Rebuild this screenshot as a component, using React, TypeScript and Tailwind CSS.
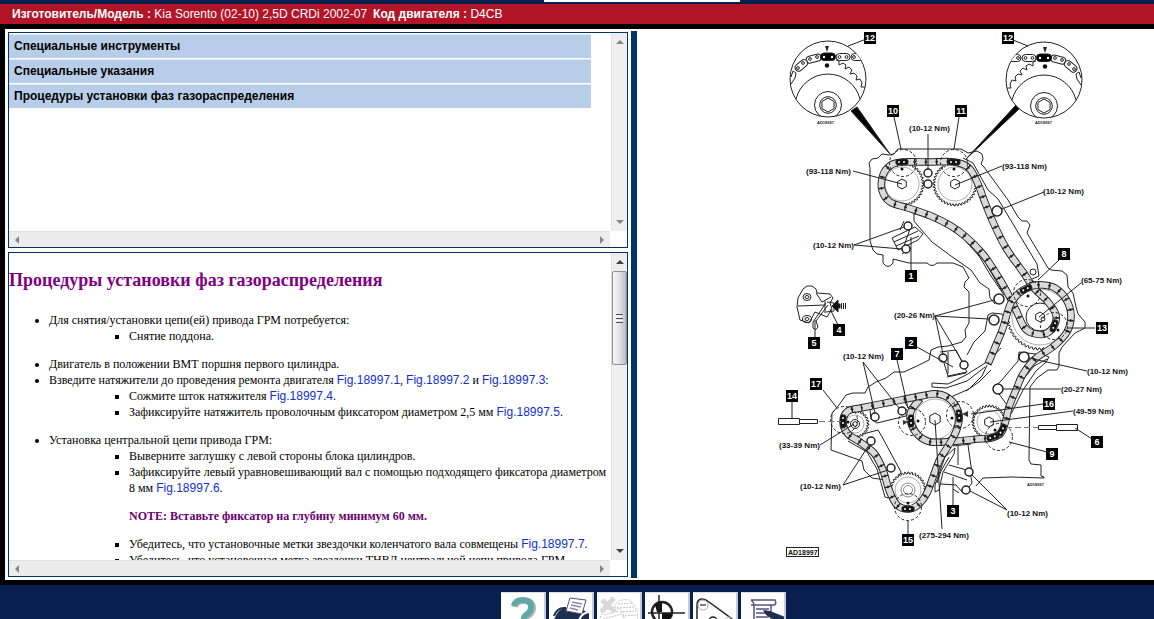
import type { ReactNode } from 'react'

type Pt = [number, number]

const SECTIONS = [
  'Специальные инструменты',
  'Специальные указания',
  'Процедуры установки фаз газораспределения',
]

/* ---------- Scroll frame ---------- */

function Arrow({ dir, dim }: { dir: 'up' | 'down' | 'left' | 'right'; dim?: boolean }) {
  const shapes = {
    up: 'M0 6 L4 2 L8 6 Z',
    down: 'M0 2 L4 6 L8 2 Z',
    left: 'M6 0 L2 4 L6 8 Z',
    right: 'M2 0 L6 4 L2 8 Z',
  }
  return (
    <svg viewBox="0 0 8 8" className="h-2 w-2" aria-hidden="true">
      <path d={shapes[dir]} fill={dim ? '#858585' : '#404040'} />
    </svg>
  )
}

function ScrollFrame({ children, size, thumb }: { children: ReactNode; size: string; thumb?: boolean }) {
  return (
    <div className={`${size} grid min-h-0 grid-cols-[minmax(0,1fr)_16px] grid-rows-[minmax(0,1fr)_16px] gap-x-px border border-[#003366] bg-white`}>
      <div className="min-h-0 overflow-hidden">{children}</div>
      <div className="flex flex-col items-center justify-between border-l border-[#e0e0e0] bg-[#eeeeee]">
        <button type="button" aria-label="Вверх" className="flex h-[18px] w-full shrink-0 items-center justify-center">
          <Arrow dir="up" dim={!thumb} />
        </button>
        {thumb && (
          <div className="flex h-[94px] w-full shrink-0 flex-col items-center justify-center gap-px rounded-xs border border-[#8f8f8f] bg-linear-to-r from-[#f7f7f7] via-[#e2e2e4] to-[#bdbdc0]">
            <span className="h-px w-[7px] bg-[#555]" />
            <span className="h-px w-[7px] bg-white" />
            <span className="h-px w-[7px] bg-[#555]" />
            <span className="h-px w-[7px] bg-white" />
            <span className="h-px w-[7px] bg-[#555]" />
          </div>
        )}
        <div className="flex-1" />
        <button type="button" aria-label="Вниз" className="flex h-[18px] w-full shrink-0 items-center justify-center">
          <Arrow dir="down" dim={!thumb} />
        </button>
      </div>
      <div className="flex items-center justify-between border-t border-[#e0e0e0] bg-[#ececec]">
        <button type="button" aria-label="Влево" className="flex h-full w-4 items-center justify-center">
          <Arrow dir="left" dim />
        </button>
        <button type="button" aria-label="Вправо" className="flex h-full w-4 items-center justify-center">
          <Arrow dir="right" dim />
        </button>
      </div>
      <div />
    </div>
  )
}

/* ---------- Procedure text ---------- */

function Fig({ n }: { n: number }) {
  return (
    <a href={`#fig-${n}`} className="font-['Liberation_Sans',Arial,sans-serif] text-[#1030d0]">
      Fig.18997.{n}
    </a>
  )
}

function Sub({ children }: { children: ReactNode }) {
  return <ul className="list-[square] pl-20">{children}</ul>
}

function Procedure() {
  return (
    <div className="font-['Liberation_Serif','Times_New_Roman',serif] text-xs leading-4 text-black">
      <h2 className="mt-[15px] mb-5 text-lg leading-6 font-bold text-[#800080]">
        Процедуры установки фаз газораспределения
      </h2>
      <ul className="list-disc pl-10">
        <li>
          Для снятия/установки цепи(ей) привода ГРМ потребуется:
          <Sub>
            <li>Снятие поддона.</li>
          </Sub>
        </li>
        <li className="mt-3">Двигатель в положении ВМТ поршня первого цилиндра.</li>
        <li>
          Взведите натяжители до проведения ремонта двигателя <Fig n={1} />, <Fig n={2} /> и <Fig n={3} />:
          <Sub>
            <li>
              Сожмите шток натяжителя <Fig n={4} />.
            </li>
            <li>
              Зафиксируйте натяжитель проволочным фиксатором диаметром 2,5 мм <Fig n={5} />.
            </li>
          </Sub>
        </li>
        <li className="mt-3">
          Установка центральной цепи привода ГРМ:
          <Sub>
            <li>Выверните заглушку с левой стороны блока цилиндров.</li>
            <li>
              Зафиксируйте левый уравновешивающий вал с помощью подходящего фиксатора диаметром 8 мм <Fig n={6} />.
              <p className="my-3 font-bold text-[#6b0070]">NOTE: Вставьте фиксатор на глубину минимум 60 мм.</p>
            </li>
            <li>
              Убедитесь, что установочные метки звездочки коленчатого вала совмещены <Fig n={7} />.
            </li>
            <li>Убедитесь, что установочная метка звездочки ТНВД центральной цепи привода ГРМ</li>
          </Sub>
        </li>
      </ul>
    </div>
  )
}

/* ---------- Timing chain diagram ---------- */

// Catmull-Rom spline through the points
function spline(pts: Pt[], closed = false) {
  const n = pts.length
  const at = (i: number) => (closed ? pts[(i + n) % n] : pts[Math.max(0, Math.min(n - 1, i))])
  let d = `M${pts[0][0]} ${pts[0][1]}`
  for (let i = 0; i < (closed ? n : n - 1); i++) {
    const [a, b, c, e] = [at(i - 1), at(i), at(i + 1), at(i + 2)]
    d += `C${b[0] + (c[0] - a[0]) / 6} ${b[1] + (c[1] - a[1]) / 6} ${c[0] - (e[0] - b[0]) / 6} ${c[1] - (e[1] - b[1]) / 6} ${c[0]} ${c[1]}`
  }
  return d
}

function toothed(cx: number, cy: number, r: number, teeth: number, depth = 2) {
  const out: string[] = []
  for (let i = 0; i < teeth * 4; i++) {
    const a = (i / (teeth * 4)) * Math.PI * 2
    const rr = i % 4 < 2 ? r : r - depth
    out.push(`${(cx + rr * Math.cos(a)).toFixed(1)},${(cy + rr * Math.sin(a)).toFixed(1)}`)
  }
  return out.join(' ')
}

function hexagon(cx: number, cy: number, r: number) {
  return [30, 90, 150, 210, 270, 330]
    .map((a) => `${cx + r * Math.cos((a * Math.PI) / 180)},${cy + r * Math.sin((a * Math.PI) / 180)}`)
    .join(' ')
}

function Gear({ x, y, r, teeth }: { x: number; y: number; r: number; teeth: number }) {
  return (
    <>
      <polygon points={toothed(x, y, r, teeth)} fill="#fff" />
      <circle cx={x} cy={y} r={r - 5} stroke="#888" strokeWidth="0.7" />
    </>
  )
}

function Chain({ d }: { d: string }) {
  return (
    <>
      <path d={d} stroke="#222" strokeWidth="7.500" />
      <path d={d} stroke="#dadada" strokeWidth="5.700" />
      <path d={d} stroke="#222" strokeWidth="6.500" strokeDasharray="1.4 9.6" />
      <path d={d} stroke="#222" strokeWidth="1.500" strokeDasharray="2.600 8.400" strokeDashoffset="0.600" />
    </>
  )
}

// Black timing-mark links with pale pins
function MarkLink({ x, y, rot }: { x: number; y: number; rot: number }) {
  return (
    <g transform={`translate(${x} ${y}) rotate(${rot})`}>
      <rect x="-6" y="-2.5" width="12" height="5" rx="1.5" fill="#111" />
      <circle cx="-3" r="1" fill="#fff" stroke="none" />
      <circle cx="2" r="1" fill="#fff" stroke="none" />
    </g>
  )
}

const CAM_CHAIN: Pt[] = [
  [902, 162], [928, 162], [953, 162], [968, 168], [977, 184], [983, 200], [992, 222], [1005, 248], [1022, 272],
  [1033, 288], [1047, 302], [1055, 315], [1053, 326], [1044, 334], [1031, 333], [1023, 327], [1015, 310],
  [1005, 290], [993, 270], [981, 253], [965, 237], [950, 226], [930, 216], [907, 208], [889, 202], [881, 190],
  [882, 175], [890, 165],
]

const PUMP_CHAIN: Pt[] = [
  [987, 364], [995, 345], [1002, 328], [1009, 305], [1018, 293], [1031, 286], [1042, 285], [1054, 288], [1065, 299],
  [1070, 315], [1066, 332], [1053, 346], [1034, 359], [1022, 374], [1015, 390], [1008, 407], [1005, 420],
  [1000, 433], [990, 438], [977, 439], [957, 441], [930, 442], [917, 435], [910, 423], [910, 411], [919, 399],
]

const BALANCE_CHAIN: Pt[] = [
  [860, 408], [890, 402], [920, 396], [937, 394], [951, 401], [958, 415], [956, 429], [949, 443], [939, 459],
  [932, 477], [926, 493], [917, 505], [907, 509], [896, 505], [888, 490], [882, 470], [873, 453], [859, 442],
  [847, 434], [842, 422], [847, 411],
]

const BOLTS: [number, number, number][] = [
  [927, 173, 4], [927, 184, 4], [996, 211, 5], [907, 226, 4], [905, 249, 4], [998, 299, 5], [993, 320, 5],
  [942, 358, 4], [963, 365, 4], [1023, 357, 5], [997, 389, 5], [874, 417, 4], [901, 411, 4], [870, 441, 4],
  [890, 468, 4], [968, 472, 4], [965, 490, 4],
]

const DASHED_RINGS: Pt[] = [
  [902, 163], [953, 163], [1026, 293], [1053, 326], [843, 420], [911, 422], [959, 415], [998, 437], [907, 507],
]

const MARK_DOTS: Pt[] = [
  [901, 169], [953, 169], [1027, 296], [1057, 330], [847, 422], [917, 421], [951, 418], [994, 430], [907, 503],
]

const LEADERS =
  'M868 38L847 46M1012 40L1027 46M893 117L900 149M958 117L953 149M927 134V169M852 171L901 184M1001 166L954 185' +
  'M1043 192L1001 209M853 245L903 227M853 245L901 249M910 237V271M1058 260L1037 280M1080 283L1038 317' +
  'M1094 328H1066M1086 371L1028 358M1060 389H1002M934 316L993 300M934 316L988 319M934 316L942 354M934 316L961 361' +
  'M916 347L952 367M862 362L874 413M862 362L898 408M896 360L907 408M822 390L836 408M791 401V419M1074 428L1091 439' +
  'M1042 404L970 414M1072 411L989 422M1046 452L1008 442M819 445L853 424M842 485L868 445M842 485L887 470' +
  'M941 529L934 420M952 506V477M1006 510L971 475M1006 510L969 491M907 534V521M832 324L837 325L829 309M814 337V320'

const CALLOUTS: [string, number, number][] = [
  ['12', 869, 38], ['12', 1007, 38], ['10', 892, 111], ['11', 960, 111], ['8', 1063, 254], ['13', 1101, 328],
  ['1', 910, 276], ['4', 838, 330], ['5', 813, 343], ['2', 910, 343], ['7', 896, 354], ['17', 815, 384],
  ['14', 791, 396], ['16', 1048, 404], ['6', 1096, 442], ['9', 1051, 454], ['3', 952, 511], ['15', 907, 540],
]

const TORQUES: [string, number, number][] = [
  ['(10-12 Nm)', 908, 131], ['(93-118 Nm)', 805, 174], ['(93-118 Nm)', 1001, 169], ['(10-12 Nm)', 1042, 194],
  ['(10-12 Nm)', 812, 248], ['(65-75 Nm)', 1080, 283], ['(20-26 Nm)', 893, 318], ['(10-12 Nm)', 842, 359],
  ['(10-12 Nm)', 1086, 374], ['(20-27 Nm)', 1060, 392], ['(49-59 Nm)', 1072, 414], ['(33-39 Nm)', 778, 448],
  ['(10-12 Nm)', 799, 489], ['(10-12 Nm)', 1006, 516], ['(275-294 Nm)', 918, 538],
]

// Enlarged view of a camshaft sprocket; the right one mirrors the left
function Magnifier({ flip }: { flip?: boolean }) {
  return (
    <g transform={flip ? 'translate(1043 80) scale(-1 1)' : 'translate(827 79)'}>
      <circle r="38" fill="#fff" />
      <g clipPath="url(#lens)">
        <path d="M-32 20A33 33 0 0 1 32 20" />
        <circle cy="26" r="13.5" />
        <circle cy="26" r="8.3" />
        <polygon points={hexagon(0, 26, 7)} />
        <path d="M8-19L11-18L11-14L15-16L18-14L17-10L21-12L24-9L22-5L26-6L29-3L28 1L32 0L34 4L33 8L37 8" />
        <g fill="#fff">
          <rect x="8" y="-25.500" width="14" height="7" rx="3.500" />
          <rect x="23" y="-25.500" width="13" height="7" rx="3.500" />
          <rect x="-22" y="-24" width="15" height="7" rx="3.500" transform="rotate(-14 -14 -21)" />
          <rect x="-34" y="-17" width="14" height="7" rx="3.500" transform="rotate(-40 -27 -14)" />
          <path d="M-37-2L-35-8L-32-6L-33-1L-37 5" />
          <circle cx="11.500" cy="-22" r="1.400" />
          <circle cx="18.500" cy="-22" r="1.400" />
          <circle cx="26" cy="-22" r="1.400" />
          <circle cx="-18" cy="-20" r="1.400" />
          <circle cx="-11" cy="-22" r="1.400" />
          <circle cx="-30" cy="-11" r="1.400" />
          <circle cx="-25" cy="-16" r="1.400" />
        </g>
        <rect x="-7.500" y="-26" width="15" height="7.500" rx="3.500" fill="#000" />
        <circle cx="-4" cy="-22" r="1.200" fill="#fff" stroke="none" />
        <circle cx="4" cy="-22" r="1.200" fill="#fff" stroke="none" />
        <path d="M-3-33H1L-1-27Z" fill="#222" stroke="none" />
        <circle cx="-1" cy="-13.500" r="2.200" fill="#111" stroke="none" />
      </g>
    </g>
  )
}

function EngineDiagram() {
  return (
    <svg
      viewBox="636 31 517 547"
      className="h-full w-full font-['Liberation_Sans',Arial,sans-serif]"
      role="img"
      aria-label="AD18997"
      fill="none"
      stroke="#222"
      strokeWidth="1"
    >
      <clipPath id="lens">
        <circle r="38" />
      </clipPath>

      {/* engine casing */}
      <path d="M869 241V168L868 163L871 159L877 158L881 154L888 155L893 154L897 149H960L967 153L976 151L981 154L982 159L980 164L983 167L1007 200L1017 217L1021 221L1026 221L1029 225L1026 233L1047 268L1050 270L1061 271L1066 275L1067 287L1072 293L1075 307L1077 314L1084 322V328L1074 333L1061 347L1058 353V366L1056 370H1047L1036 378L1029 387L1028 460L1030 464L1040 465V476L1043 477V478L1010 477L982 478L975 486" />
      <path d="M869 241L872 250L876 254L882 255V263Q887 270 892 263V259L900 261L908 263H926Q931 268 936 263L952 263L962 267L968 278L964 282L963 287L968 292V323L964 330L965 337L961 342L947 346L937 347L930 350L928 360L918 365L903 372L893 372L885 378L875 382L867 387L864 393L852 393L845 395L838 405L831 413L830 450L861 461L863 470L871 478L885 480" />
      <path d="M986 365L981 376L968 389L950 397L940 398M990 370L978 382L965 391" />

      {/* guides and brackets */}
      <path d="M913 214L920 213L940 221L961 237L978 256L990 276L1003 295M913 214V221L918 227L931 242L950 256L970 270L979 283L988 289L989 298L994 304M925 214L945 222L965 239L984 262L1001 291" />
      <path d="M962 158L972 163L982 181L987 190L997 199L1036 264L1038 276L1031 279M960 162L968 166L980 190" />
      <circle cx="1032" cy="272" r="3" />
      <path d="M987 315L991 313L1001 314L1003 318L995 348L986 363M987 315L984 331L973 342L966 355" />
      <path d="M1018 352L1043 355L1048 357L1045 362L1035 371L1022 390L1010 414L1005 413M1018 352L1017 361L1000 381L993 387L1006 405M1046 359L1033 366L1020 382L1009 409" />
      <path d="M891 238L914 227L922 234L917 240L897 250ZM893 242L917 231M895 246L918 236M903 221L899 230M909 229L903 246M901 254L910 248" fill="#fff" />
      <path d="M939 352L955 350L961 362L966 372L947 376L943 363M947 352V374M946 377L965 373M931 383L947 384L965 375L989 360L1000 348M931 383V387L945 388L966 381L984 367" />
      <path d="M869 410L872 408L903 401L908 409L905 416L876 423L870 419Z" fill="#fff" />
      <path d="M847 438L877 430L880 435L900 472L891 489" />
      <path d="M847 441L866 452L876 469L884 497L887 498L889 492M851 440L870 452L881 473L886 491" />
      <path d="M954 448L944 457L934 485V492L938 490L942 472L953 454ZM948 457L940 471L936 483" fill="#fff" />
      <path d="M948 465L969 471L971 483L963 494L955 485L940 484M943 472L966 480M952 446L970 444M957 446V465M967 445L971 473M958 493L952 489" />

      {/* sprockets */}
      <Gear x={901} y={184} r={22} teeth={40} />
      <Gear x={954} y={184} r={22} teeth={40} />
      <Gear x={1039} y={317} r={33} teeth={50} />
      <circle cx="1039" cy="317" r="14" />
      <Gear x={934} y={419} r={25} teeth={44} />
      <Gear x={854} y={424} r={14} teeth={26} />
      <Gear x={988} y={422} r={17} teeth={32} />
      <Gear x={907} y={490} r={18} teeth={32} />

      <Chain d={spline(CAM_CHAIN, true)} />
      <Chain d={spline(PUMP_CHAIN)} />
      <Chain d={spline(BALANCE_CHAIN, true)} />

      <g fill="#fff">
        <polygon points={hexagon(901, 184, 5)} />
        <polygon points={hexagon(954, 184, 5)} />
        <polygon points={hexagon(1039, 317, 5)} />
        <circle cx="1042" cy="319" r="2" />
        <polygon points={hexagon(934, 419, 6)} />
        <polygon points={hexagon(988, 422, 5)} />
        <circle cx="854" cy="424" r="4.500" />
        <polygon points={hexagon(854, 424, 2.5)} />
        <circle cx="907" cy="490" r="7" stroke="#888" />
        <circle cx="907" cy="490" r="4.500" stroke="#888" />
      </g>

      <MarkLink x={901} y={162} rot={0} />
      <MarkLink x={953} y={162} rot={0} />
      <MarkLink x={1025} y={289} rot={-25} />
      <MarkLink x={1053} y={326} rot={110} />
      <MarkLink x={842} y={421} rot={90} />
      <MarkLink x={910} y={421} rot={90} />
      <MarkLink x={958} y={416} rot={85} />
      <MarkLink x={992} y={437} rot={-20} />
      <MarkLink x={1001} y={430} rot={-60} />
      <MarkLink x={907} y={509} rot={0} />

      <g strokeDasharray="3 2">
        {DASHED_RINGS.map(([x, y]) => (
          <circle key={`${x}-${y}`} cx={x} cy={y} r="13.500" />
        ))}
      </g>
      {MARK_DOTS.map(([x, y]) => (
        <circle key={`${x}-${y}`} cx={x} cy={y} r="1.500" fill="#111" stroke="none" />
      ))}
      <path d="M902 420L907 422L902 425ZM967 411L961 414L967 417Z" fill="#333" stroke="none" />

      <g fill="#fff" strokeWidth="1.500">
        {BOLTS.map(([x, y, r]) => (
          <circle key={`${x}-${y}`} cx={x} cy={y} r={r} />
        ))}
      </g>

      {/* locking pins */}
      <path d="M777.500 418.500H798.500V424.500H777.500ZM798.500 419.500H816.500V423.500H798.500ZM1037.500 425.500H1055.500V429.500H1037.500ZM1055.500 424.500H1076.500V430.500H1055.500Z" fill="#fff" />
      <path d="M818 421.500H840M1005 427.500H1037" stroke="#777" strokeDasharray="6 3" />

      {/* detached tensioner */}
      <path d="M796 307L797 298L802 289L806 286L811 286L815 289L816 293L829 294L832 298L829 303L831 309L826 317L814 312L808 323L799 320Z" fill="#fff" />
      <ellipse cx="806" cy="297" rx="4" ry="3.500" />
      <ellipse cx="806" cy="319" rx="4.500" ry="3.500" />
      <ellipse cx="806" cy="297" rx="2" ry="1.500" />
      <ellipse cx="806" cy="319" rx="2" ry="1.500" />
      <path d="M797 306L824 305M824 301V313M815 293L821 302L830 297M826 302L833 303V311L825 312M825 303L812 322V328Q815 331 817 327L815 321L827 305" />
      <path d="M831 306L837 300V304H839V308H837V312Z" fill="#111" />
      <path d="M840.500 303V309M842.500 303V309M844.500 303V309" />

      {/* magnified camshaft marks */}
      <path d="M850 111L856 107L889 154ZM1015 105L1018 109L965 159Z" fill="#000" />
      <Magnifier />
      <Magnifier flip />

      <path d={LEADERS} />

      <g fill="#111" stroke="none" fontSize="8" fontWeight="700">
        {TORQUES.map(([label, x, y]) => (
          <text key={`${x}-${y}`} x={x} y={y}>
            {label}
          </text>
        ))}
      </g>
      {CALLOUTS.map(([label, x, y]) => (
        <g key={`${x}-${y}`} stroke="none">
          <rect x={x - 6} y={y - 6} width="12" height="12" fill="#000" />
          <text x={x} y={y + 3} fill="#fff" fontSize="9" fontWeight="700" textAnchor="middle">
            {label}
          </text>
        </g>
      ))}
      <g fill="#222" stroke="none" fontSize="4" fontWeight="700">
        <text x="816" y="124">AD18997</text>
        <text x="1034" y="124">AD18997</text>
        <text x="1026" y="486">AD18997</text>
      </g>
      <rect x="785.500" y="547.500" width="32" height="9" />
      <text x="787" y="555" fill="#111" stroke="none" fontSize="7" fontWeight="700">AD18997</text>
    </svg>
  )
}

/* ---------- Toolbar ---------- */

const TOOLS: { name: string; art: ReactNode }[] = [
  {
    name: 'Справка',
    art: (
      <>
        <path d="M14 14Q15 8 23 8Q32 8 32 15Q32 20 27 23Q24 25 24 31" stroke="#b5b5b5" strokeWidth="6" />
        <path d="M13 13Q14 7 22 7Q30 7 30 14Q30 19 25 22Q22 24 22 31" stroke="#5fa8a6" strokeWidth="6" />
      </>
    ),
  },
  {
    name: 'Печать',
    art: (
      <>
        <path d="M4 28L9 19Q13 15 18 15L34 17L40 20V40H4Z" fill="#1c2f4f" />
        <path d="M5 23Q8 14 17 15" stroke="#1c2f4f" strokeWidth="2" />
        <path d="M21 5L37 7L33 21L17 18Z" fill="#fff" stroke="#56507c" />
        <path d="M23 9L33 11M22 12L32 14M21 15L29 17" stroke="#8a84a8" strokeWidth="1.500" />
        <path d="M30 28Q32 20 40 19" stroke="#fff" strokeWidth="2" />
      </>
    ),
  },
  {
    name: 'Очистить',
    art: (
      <>
        <path d="M3 25Q5 16 17 15Q20 5 32 7Q43 15 40 28M17 15Q27 13 27 28M7 22L22 18M6 26L25 21M21 11L36 10M20 15L38 14M23 19L39 18M25 23L41 22" stroke="#c4c4c4" strokeDasharray="2 1" />
        <path d="M5 7L18 19M17 5L4 19" stroke="#d9d9d9" strokeWidth="5" />
      </>
    ),
  },
  {
    name: 'Центрировать',
    art: (
      <>
        <circle cx="17" cy="19" r="10" stroke="#222" strokeWidth="2.500" />
        <path d="M17 19V9A10 10 0 0 0 10 12L12 19ZM17 20H27A10 10 0 0 1 17 30Z" fill="#111" />
        <path d="M14 2V30M3 20H40" stroke="#222" strokeWidth="1.500" />
      </>
    ),
  },
  {
    name: 'Ремень',
    art: (
      <>
        <path d="M4 30V12Q4 6 9 6Q12 6 16 9L42 28" stroke="#222" strokeWidth="1.500" />
        <circle cx="10" cy="12" r="5" stroke="#aaa" />
        <path d="M7 12H13" stroke="#555" strokeWidth="1.500" />
        <circle cx="20" cy="28" r="4" stroke="#222" strokeWidth="1.500" />
        <circle cx="36" cy="29" r="5" stroke="#bbb" />
      </>
    ),
  },
  {
    name: 'Заметки',
    art: (
      <>
        <path d="M10 7H34Q36 11 33 12H30V30M10 7Q13 9 13 13V30M10 12H30" stroke="#56507c" strokeWidth="1.500" />
        <path d="M15 16H28M15 20H28M15 24H28" stroke="#56507c" strokeWidth="1.500" />
        <path d="M22 17L29 18L44 24V30L37 29L25 22Z" fill="#1c2f4f" />
      </>
    ),
  },
]

function Toolbar() {
  return (
    <footer className="flex h-[34px] shrink-0 overflow-hidden bg-[#081f4f] pt-[7px]">
      <div className="flex-[501]" />
      <div className="flex gap-[3px]">
        {TOOLS.map((tool) => (
          <button
            key={tool.name}
            type="button"
            aria-label={tool.name}
            className="h-[45px] w-[45px] shrink-0 border-t border-r-2 border-b-2 border-t-[#dddddd] border-r-[#c9ccd4] border-b-[#c9ccd4] bg-white"
          >
            <svg viewBox="0 0 43 42" className="block h-full w-full" fill="none" aria-hidden="true">
              {tool.art}
            </svg>
          </button>
        ))}
      </div>
      <div className="flex-[368]" />
    </footer>
  )
}

export default function App() {
  return (
    <div className="flex h-screen flex-col overflow-hidden bg-black font-['Liberation_Sans',Arial,sans-serif]">
      <div className="flex h-1 shrink-0 items-start bg-[#081f4f]">
        <div className="flex-[544]" />
        <div className="h-0.5 flex-[196] bg-white" />
        <div className="flex-[414]" />
      </div>
      <header className="flex h-5 shrink-0 items-center gap-[6px] bg-[#b11527] pl-3 text-xs whitespace-nowrap text-white">
        <p>
          <b>Изготовитель/Модель :</b> Kia Sorento (02-10) 2,5D CRDi 2002-07
        </p>
        <p>
          <b>Код двигателя :</b> D4CB
        </p>
      </header>

      <main className="mt-[5px] mb-[5px] ml-[5px] flex min-h-0 flex-1 bg-white">
        <div className="flex min-w-0 flex-[620] flex-col gap-1 p-[3px]">
          <ScrollFrame size="flex-[216]">
            <nav className="mt-px mr-[19px] flex flex-col gap-px">
              {SECTIONS.map((title) => (
                <button
                  key={title}
                  type="button"
                  className="h-6 border-t border-[#dde7f4] bg-[#b8cde8] pb-0.5 pl-[5px] text-left text-xs font-bold text-black"
                >
                  {title}
                </button>
              ))}
            </nav>
          </ScrollFrame>
          <ScrollFrame size="flex-[325]" thumb>
            <Procedure />
          </ScrollFrame>
        </div>
        <div className="my-[2px] w-[6px] shrink-0 bg-[#003366]" />
        <div className="min-w-0 flex-[517] py-[2px]">
          <EngineDiagram />
        </div>
      </main>

      <Toolbar />
    </div>
  )
}
